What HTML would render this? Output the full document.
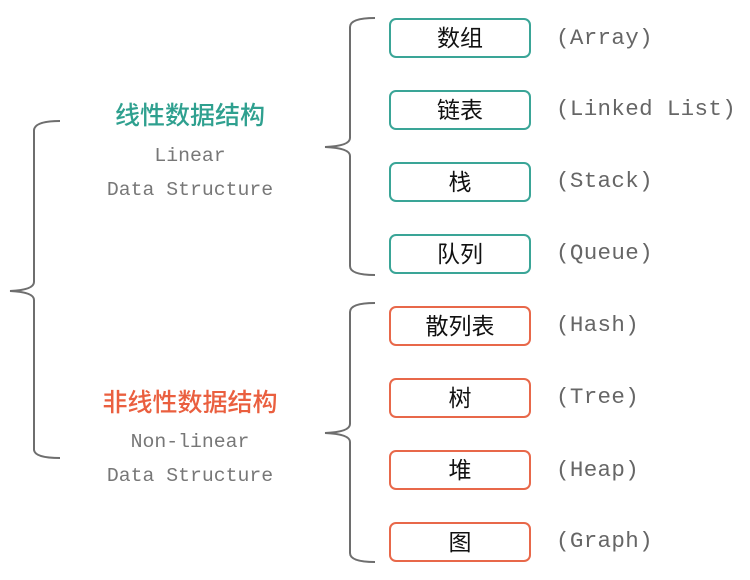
<!DOCTYPE html>
<html><head><meta charset="utf-8"><style>
html,body{margin:0;padding:0;background:#fff;width:750px;height:580px;overflow:hidden;position:relative}
.t{position:absolute;font-family:"Liberation Sans","Noto Sans CJK SC",sans-serif;font-weight:500;font-size:25px;width:300px;text-align:center;left:40px;line-height:30px}
.m{position:absolute;font-family:"Liberation Mono",monospace;color:#777;font-size:19.8px;width:300px;text-align:center;left:40px;line-height:24px}
.b{position:absolute;left:389px;width:138px;height:36px;border:2px solid;border-radius:7px;box-sizing:content-box;font-family:"Liberation Sans","Noto Sans CJK SC",sans-serif;font-size:23px;font-weight:400;line-height:36px;text-align:center;color:#111}
.g{border-color:#3aa597}.r{border-color:#e8684a}
.l{position:absolute;left:556px;font-family:"Liberation Mono",monospace;color:#666;font-size:22.5px;letter-spacing:0.35px;line-height:40px}
</style></head><body>
<svg width="750" height="580" style="position:absolute;left:0;top:0" fill="none" stroke="#6e6e6e" stroke-width="2">
<path d="M60 121 Q35 121 34 130 L34 282 Q34 290 10 291 Q34 292 34 300 L34 450 Q35 458 60 458"/>
<path d="M375 18 Q350 18 350 27 L350 138 Q350 146 325 147 Q350 148 350 156 L350 266 Q350 275 375 275"/>
<path d="M375 303 Q350 303 350 312 L350 424 Q350 432 325 433 Q350 434 350 442 L350 553 Q350 562 375 562"/>
</svg>
<div class="t" style="top:101px;color:#2fa08f">线性数据结构</div>
<div class="m" style="top:144px">Linear</div>
<div class="m" style="top:178px">Data Structure</div>
<div class="t" style="top:388px;color:#ea5f3f">非线性数据结构</div>
<div class="m" style="top:430px">Non-linear</div>
<div class="m" style="top:464px">Data Structure</div>

<div class="b g" style="top:18px">数组</div><div class="l" style="top:18px">(Array)</div>
<div class="b g" style="top:90px">链表</div><div class="l" style="top:89px">(Linked List)</div>
<div class="b g" style="top:162px">栈</div><div class="l" style="top:161px">(Stack)</div>
<div class="b g" style="top:234px">队列</div><div class="l" style="top:233px">(Queue)</div>
<div class="b r" style="top:306px">散列表</div><div class="l" style="top:305px">(Hash)</div>
<div class="b r" style="top:378px">树</div><div class="l" style="top:377px">(Tree)</div>
<div class="b r" style="top:450px">堆</div><div class="l" style="top:450px">(Heap)</div>
<div class="b r" style="top:522px">图</div><div class="l" style="top:521px">(Graph)</div>
</body></html>
